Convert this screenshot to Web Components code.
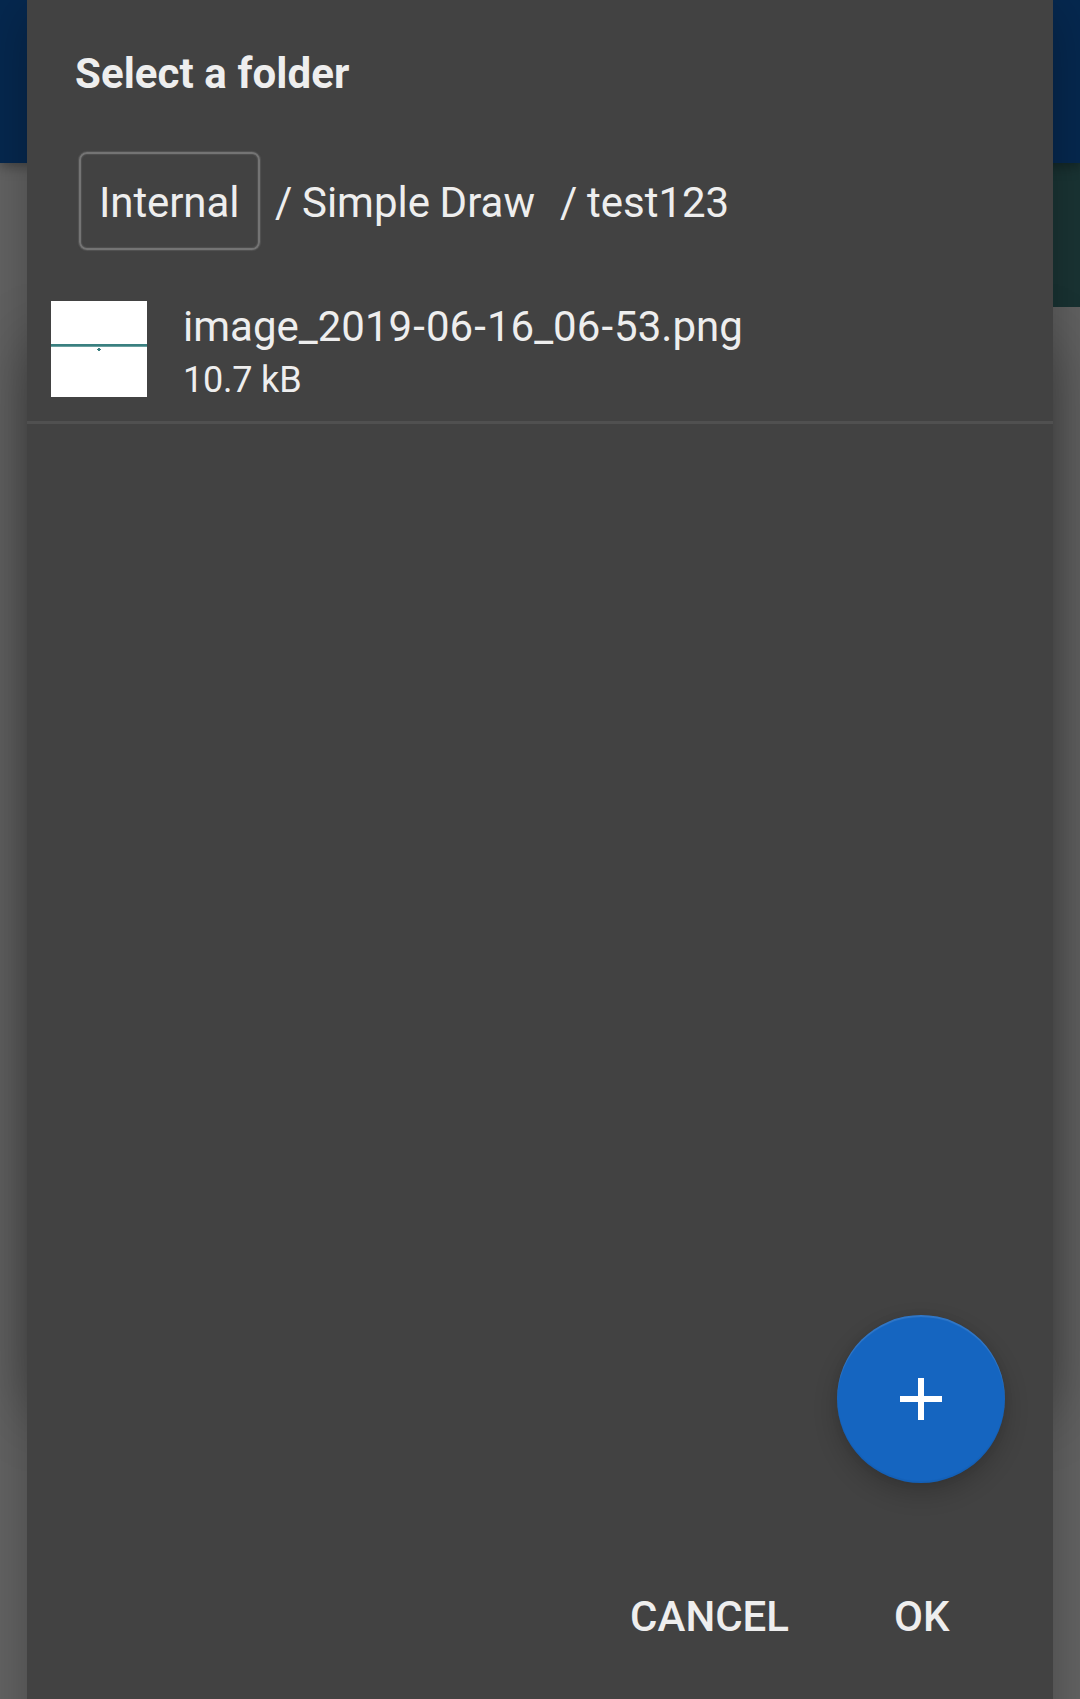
<!DOCTYPE html>
<html lang="en">
<head>
<meta charset="utf-8">
<title>Select a folder</title>
<style>
html, body { margin: 0; height: 100%; overflow: hidden; background: #616161; }
body { font-family: Roboto, "Liberation Sans", sans-serif; color: #eee; }
</style>
</head>
<body>
<picker-screen>
  <folder-dialog heading="Select a folder">
    <path-crumbs slot="path">
      <path-crumb boxed>Internal</path-crumb>
      <path-crumb gap="15">/ Simple Draw</path-crumb>
      <path-crumb gap="25">/ test123</path-crumb>
    </path-crumbs>
    <file-row name="image_2019-06-16_06-53.png" size="10.7 kB"></file-row>
    <add-fab slot="fab"></add-fab>
    <text-action slot="actions">CANCEL</text-action>
    <text-action slot="actions">OK</text-action>
  </folder-dialog>
</picker-screen>
<script>
const define = (name, html, setup) => {
  const template = document.createElement('template');
  template.innerHTML = html;
  customElements.define(name, class extends HTMLElement {
    constructor() {
      super();
      this.attachShadow({ mode: 'open' }).append(template.content.cloneNode(true));
    }
    connectedCallback() { if (setup) setup(this, this.shadowRoot); }
  });
};

define('picker-screen', `
<style>
:host { display: block; position: relative; width: 1080px; height: 1699px; overflow: hidden; background: #636363; }
.app { display: flex; flex-direction: column; align-items: flex-end; height: 100%; }
.bar { align-self: stretch; height: 163px; background: #06284f; box-shadow: 0 3px 12px rgba(0,0,0,.35); z-index: 1; }
.swatch { width: 144px; height: 144px; background: #1a3434; }
.overlay { position: absolute; z-index: 2; inset: 0; display: grid; grid-template: 100% / 100%; padding: 0 27px; }
.overlay > div, ::slotted(*) { grid-area: 1 / 1; }
.ambient { margin: 10px 0 -80px; box-shadow: 0 0 50px rgba(0,0,0,.27); }
.key { margin: 345px 4px 289px; box-shadow: 0 0 56px rgba(0,0,0,.36); }
</style>
<div class="app"><div class="bar"></div><div class="swatch"></div></div>
<div class="overlay"><div class="ambient"></div><div class="key"></div><slot></slot></div>`);

define('folder-dialog', `
<style>
:host { display: flex; flex-direction: column; position: relative; background: #424242; }
h1 { margin: 49px 48px 0; font-size: 42px; line-height: 50px; font-weight: 700; letter-spacing: .07px; }
.path { margin: 52px 0 0 51px; }
.list { flex: 1; margin-top: 27px; }
.fab { position: absolute; right: 48px; bottom: 216px; }
.actions { display: flex; justify-content: flex-end; gap: 105px; padding: 0 103.5px 57px 0; }
</style>
<h1></h1>
<div class="path"><slot name="path"></slot></div>
<div class="list"><slot></slot></div>
<div class="fab"><slot name="fab"></slot></div>
<div class="actions"><slot name="actions"></slot></div>`,
(el, root) => { root.querySelector('h1').textContent = el.getAttribute('heading'); });

define('path-crumbs', `
<style>:host { display: flex; align-items: center; height: 100px; }</style><slot></slot>`);

define('path-crumb', `
<style>
:host { display: block; box-sizing: border-box; font-size: 42px; line-height: 50px; white-space: nowrap; word-spacing: -.8px; margin-left: var(--gap, 0); padding-top: 3px; }
:host([boxed]) { width: 181px; height: 98px; padding: 24px 0 0 18px; border: 2px solid #747474; border-radius: 8px; box-shadow: 0 0 1px 1px #545454, inset 0 0 1px 1px #505050; letter-spacing: -.1px; margin-left: 1px; }
</style><slot></slot>`,
el => { if (el.hasAttribute('gap')) el.style.setProperty('--gap', el.getAttribute('gap') + 'px'); });

define('file-row', `
<style>
:host { display: flex; align-items: flex-start; box-sizing: border-box; height: 146px; padding: 23px 0 0 24px; border-bottom: 3px solid #505050; }
svg { display: block; width: 96px; height: 96px; }
.text { margin: 1px 0 0 36px; display: flex; flex-direction: column; }
.name { font-size: 42px; line-height: 50px; }
.name i { font-style: normal; padding: 0 1.1px; }
.size { font-size: 36px; line-height: 44px; margin-top: 6px; letter-spacing: -.2px; }
</style>
<svg viewBox="0 0 96 96">
  <rect width="96" height="96" fill="#fff"/>
  <rect y="43" width="96" height="2" fill="#3a8080"/><rect y="45" width="96" height="1" fill="#6ba0a0"/>
  <path d="M46 48h4v1h-4zM47 47h2v3h-2z" fill="#3a8080"/>
</svg>
<div class="text"><span class="name"></span><span class="size"></span></div>`,
(el, root) => {
  root.querySelector('.name').innerHTML = el.getAttribute('name').replaceAll('-', '<i>-</i>');
  root.querySelector('.size').textContent = el.getAttribute('size');
});

define('add-fab', `
<style>
:host { display: grid; place-items: center; width: 168px; height: 168px; border-radius: 50%; background: #1565c0;
  box-shadow: 0 10px 24px rgba(0,0,0,.2), 0 0 10px rgba(0,0,0,.06), inset 0 2px 1px rgba(255,255,255,.12), inset 0 -2px 1px rgba(0,0,0,.05); }
svg { display: block; }
</style>
<svg width="72" height="72" viewBox="0 0 24 24" fill="#fff"><path d="M19 13h-6v6h-2v-6H5v-2h6V5h2v6h6z"/></svg>`);

define('text-action', `
<style>:host { display: block; font-size: 42px; line-height: 50px; font-weight: 500; }</style><slot></slot>`);
</script>
</body>
</html>
